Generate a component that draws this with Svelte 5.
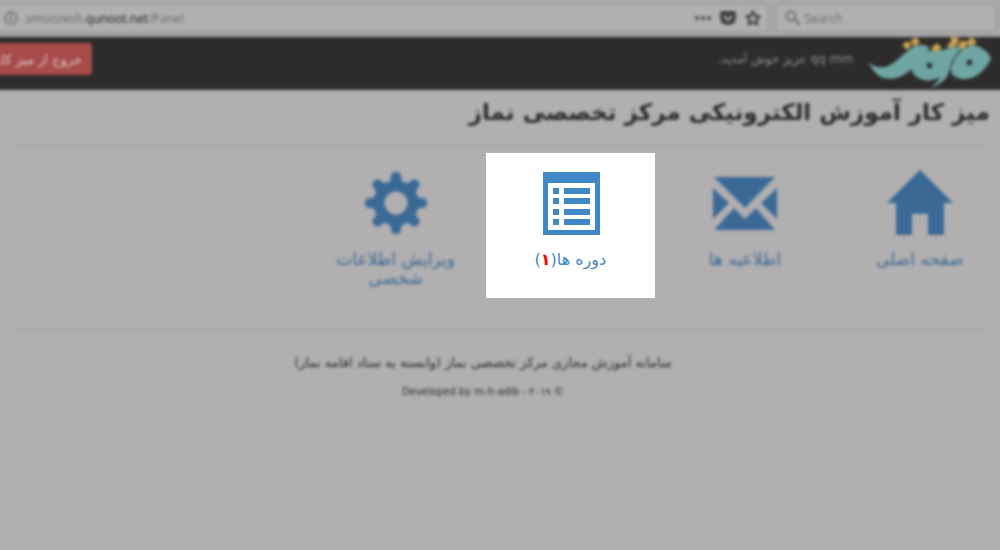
<script>
  const before = [
    { title: "صفحه اصلی", icon: "home" },
    { title: "اطلاعیه ها", icon: "mail" },
  ];
  const courses = 1;
  const faNumber = (n) => n.toLocaleString("fa-IR");
</script>

<div class="browser soft">
  <div class="address">
    <svg class="info" viewBox="0 0 16 16" aria-hidden="true">
      <circle cx="8" cy="8" r="6" fill="none" stroke="currentColor" stroke-width="1.5" />
      <path d="M8 7v4M8 4v2" stroke="currentColor" stroke-width="1.6" />
    </svg>
    <span class="url">amoozesh.<b>qunoot.net</b>/Panel</span>
    <svg class="tool" viewBox="0 0 16 16" aria-hidden="true">
      <g fill="currentColor">
        <circle cx="2" cy="8" r="1.9" />
        <circle cx="8" cy="8" r="1.9" />
        <circle cx="14" cy="8" r="1.9" />
      </g>
    </svg>
    <svg class="tool" viewBox="0 0 16 16" aria-hidden="true">
      <path d="M2 1h12q2 0 2 2v4q0 8-8 8T0 7V3q0-2 2-2z" fill="currentColor" />
      <path d="M4 6l4 4 4-4" fill="none" stroke="#b1afb0" stroke-width="2" />
    </svg>
    <svg class="tool" viewBox="0 0 16 16" aria-hidden="true">
      <path
        d="M8 1.5l2 4.3 4.6.5-3.3 3.2.9 4.9L8 12.1l-4.2 2.3.9-4.9L1.4 6.3 6 5.8z"
        fill="none"
        stroke="currentColor"
        stroke-width="2.2"
        stroke-linejoin="round"
      />
    </svg>
  </div>
  <label class="search">
    <svg viewBox="0 0 16 16" aria-hidden="true">
      <circle cx="6" cy="6" r="4.5" fill="none" stroke="currentColor" stroke-width="1.8" />
      <path d="M9.5 9.5L15 15" stroke="currentColor" stroke-width="2" />
    </svg>
    <input type="text" placeholder="Search" aria-label="Search" />
  </label>
</div>

<div class="panel" dir="rtl">
  <header class="soft">
    <svg class="logo" viewBox="0 0 120 50" role="img" aria-label="قنوت">
      <g fill="#6fa5a3">
        <path d="M-2 25C2 29 10 32 18 29C28 25 38 10 49 8Q56 7 60 12C52 18 47 27 38 35C28 43 15 44 8 38Q2 33 -2 25z" />
        <path
          fill-rule="evenodd"
          d="M41 31C46 21 53 14 65 13Q72 14 76 12Q84 8 92 11C85 18 82 23 80 31C78 41 73 46 61 51C66 46 69 43 70 40C63 44 53 45 47 40Q42 37 41 31zM57 26v5h5v-5z"
        />
        <path
          fill-rule="evenodd"
          d="M82 29C84 19 92 11 102 8C112 9 118 15 121 21C118 29 112 35 106 39C97 44 86 43 81 36Q83 34 80 32zM97 23v5h5v-5z"
        />
      </g>
      <g fill="#c6a253">
        <path d="M32 8l5-4 5 4-5 5zM40 4l6-4 4 5-5 5zM61 11l6-5 5 5-6 5zM76 9Q82 6 81 0l8 1q0 7-7 10zM87 8l6-5 5 4-5 6zM96 5l6-5 5 5-6 5z" />
      </g>
    </svg>
    <p class="welcome">qq mm عزیز خوش آمدید.</p>
    <button type="button">خروج از میز کار</button>
  </header>

  <main>
    <h1 class="soft">میز کار آموزش الکترونیکی مرکز تخصصی نماز</h1>
    <nav>
      {#each before as item}
        <a class="tile soft" href="#{item.icon}">
          <svg viewBox="0 0 66 66" aria-hidden="true">
            {#if item.icon === "home"}
              <path d="M33 0L66 33H57V65H41V44H25V65H9V33H0z" fill="currentColor" />
            {:else}
              <path
                d="M2 7H63L33 38zM1 18L17 33 1 49zM65 18L49 33 65 49zM22 38L33 49 44 38 63 60H2z"
                fill="currentColor"
              />
            {/if}
          </svg>
          <span>{item.title}</span>
        </a>
      {/each}

      <a class="tile active" href="#courses">
        <svg viewBox="0 0 66 66" aria-hidden="true">
          <path
            fill-rule="evenodd"
            d="M6 2H63V65H6zM11 13V60H58V13z"
            fill="currentColor"
          />
          {#each [18, 28, 39, 49] as y}
            <path d="M16 {y}h6v6h-6zM27 {y}h26v6h-26z" fill="currentColor" />
          {/each}
        </svg>
        <span>دوره ها(<em>{faNumber(courses)}</em>)</span>
      </a>

      <a class="tile soft" href="#profile">
        <svg viewBox="0 0 66 66" aria-hidden="true">
          <circle cx="33" cy="33" r="17" fill="none" stroke="currentColor" stroke-width="11" />
          {#each [0, 45, 90, 135, 180, 225, 270, 315] as angle}
            <path
              d="M23 14Q28 12 28 7Q28 2 33 2T38 7Q38 12 43 14L40 18H26z"
              fill="currentColor"
              transform="rotate({angle} 33 33)"
            />
          {/each}
        </svg>
        <span>ویرایش اطلاعات شخصی</span>
      </a>
    </nav>
  </main>

  <footer class="soft">
    <p>سامانه آموزش مجازی مرکز تخصصی نماز (وابسته به ستاد اقامه نماز)</p>
    <small dir="ltr">Developed by m-h-adib - ۲۰۱۹ ©</small>
  </footer>
</div>

<style>
  :global(body) {
    margin: 0;
    background: #b1afb0;
    overflow-x: hidden;
  }

  /* everything except the highlighted tile is out of focus */
  .soft {
    filter: blur(1px) blur(1px);
  }

  /* bars run past the window so that their blurred ends stay outside it */
  .browser,
  header {
    display: flex;
    box-sizing: border-box;
    margin: 0 -6px;
  }

  .browser {
    gap: 8px;
    height: 37px;
    padding: 4px 10px 4px 0;
    background: #a8a6a7;
    border-bottom: 1px solid #929091;
    font-family: "Open Sans", sans-serif;
    color: #6c6a6b;
  }

  .address,
  .search {
    display: flex;
    align-items: center;
    box-sizing: border-box;
    background: #b1afb0;
    border: 1px solid #9a9899;
    border-radius: 3px;
  }

  .address {
    flex: 1;
    gap: 9px;
    padding: 0 6px 0 8px;
  }

  .info {
    width: 16px;
    height: 16px;
  }

  .url {
    flex: 1;
    margin-left: -3px;
    font-size: 12px;
  }

  .url b {
    font-weight: 400;
    color: #222021;
  }

  .tool {
    width: 16px;
    height: 16px;
    color: #3f3d3e;
  }

  .search {
    width: 22%;
    gap: 4px;
    padding: 0 8px;
  }

  .search svg {
    flex: none;
    width: 16px;
    height: 16px;
  }

  .search input {
    width: 100%;
    min-width: 0;
    padding: 0;
    border: 0;
    background: none;
    font: inherit;
    font-size: 12px;
  }

  .search input::placeholder {
    color: #6c6a6b;
  }

  .panel {
    font-family: "DejaVu Sans", sans-serif;
    color: #2d2b2c;
  }

  header {
    align-items: flex-start;
    height: 53px;
    padding: 0 16px 0 6px;
    background: #2d2b2c;
  }

  .logo {
    width: 120px;
    height: 50px;
    overflow: visible;
  }

  .welcome {
    flex: 1;
    margin: 12px 17px 0 0;
    font-size: 12px;
    line-height: 20px;
    color: #949293;
  }

  header button {
    width: 122px;
    height: 32px;
    margin: 6px 0 0 -30px;
    padding: 0 10px;
    border: 0;
    border-radius: 3px;
    background: #a84b4a;
    color: #dccaca;
    font: 13px "DejaVu Sans", sans-serif;
    white-space: nowrap;
    text-align: right;
  }

  h1 {
    margin: 0 10px 6px;
    padding: 1px 0 13px;
    border-bottom: 1px solid #a6a4a5;
    font-size: 23px;
    line-height: 42px;
    font-weight: 700;
  }

  nav {
    display: grid;
    grid-template-columns: repeat(5, 16.8%);
    gap: 6px;
    margin-right: -4px;
  }

  .tile {
    display: flex;
    flex-direction: column;
    align-items: center;
    gap: 14px;
    box-sizing: border-box;
    min-height: 145px;
    padding: 17px 18px 0;
    color: #3b6996;
    font-size: 17px;
    line-height: 19px;
    text-align: center;
    text-decoration: none;
  }

  .tile svg {
    width: 66px;
    height: 66px;
  }

  .tile.active {
    background: #fff;
    color: #3f87c7;
    font-size: 16px;
  }

  em {
    font-style: normal;
    font-weight: 700;
    color: #f00;
  }

  footer {
    margin: 32px 10px 0;
    padding: 20px 34px 0 0;
    border-top: 1px solid #a6a4a5;
    text-align: center;
    font-size: 13px;
    line-height: 24px;
  }

  footer p {
    margin: 0 0 4px;
  }

  footer small {
    font-size: 10px;
  }
</style>
